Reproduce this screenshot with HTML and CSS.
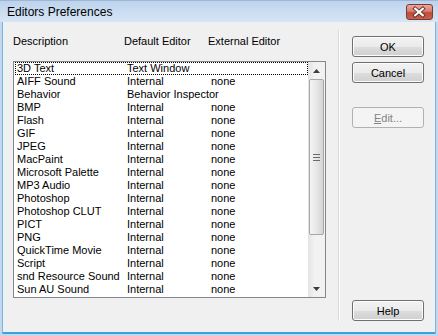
FILE: index.html
```html
<!DOCTYPE html>
<html>
<head>
<meta charset="utf-8">
<link rel="stylesheet" href="styles.css">
</head>
<body>
<div class="window">
  <div class="titlebar">
    <span class="title">Editors Preferences</span>
    <div class="close">
      <svg width="27" height="16" viewBox="0 0 27 16">
        <path d="M9.5 4.5 L17.5 11.5 M17.5 4.5 L9.5 11.5" stroke="#5a2a22" stroke-width="4" stroke-linecap="square"/>
        <path d="M9.5 4.5 L17.5 11.5 M17.5 4.5 L9.5 11.5" stroke="#ffffff" stroke-width="2.2" stroke-linecap="square"/>
      </svg>
    </div>
  </div>
  <div class="client">
    <div class="main">
      <div class="headers">
        <span class="c1">Description</span><span class="c2">Default Editor</span><span class="c3">External Editor</span>
      </div>
      <div class="listbox">
        <div class="rows">
          <div class="row focus"><span class="c1">3D Text</span><span class="c2">Text Window</span><span class="c3"></span></div>
          <div class="row"><span class="c1">AIFF Sound</span><span class="c2">Internal</span><span class="c3">none</span></div>
          <div class="row"><span class="c1">Behavior</span><span class="c2">Behavior Inspector</span><span class="c3"></span></div>
          <div class="row"><span class="c1">BMP</span><span class="c2">Internal</span><span class="c3">none</span></div>
          <div class="row"><span class="c1">Flash</span><span class="c2">Internal</span><span class="c3">none</span></div>
          <div class="row"><span class="c1">GIF</span><span class="c2">Internal</span><span class="c3">none</span></div>
          <div class="row"><span class="c1">JPEG</span><span class="c2">Internal</span><span class="c3">none</span></div>
          <div class="row"><span class="c1">MacPaint</span><span class="c2">Internal</span><span class="c3">none</span></div>
          <div class="row"><span class="c1">Microsoft Palette</span><span class="c2">Internal</span><span class="c3">none</span></div>
          <div class="row"><span class="c1">MP3 Audio</span><span class="c2">Internal</span><span class="c3">none</span></div>
          <div class="row"><span class="c1">Photoshop</span><span class="c2">Internal</span><span class="c3">none</span></div>
          <div class="row"><span class="c1">Photoshop CLUT</span><span class="c2">Internal</span><span class="c3">none</span></div>
          <div class="row"><span class="c1">PICT</span><span class="c2">Internal</span><span class="c3">none</span></div>
          <div class="row"><span class="c1">PNG</span><span class="c2">Internal</span><span class="c3">none</span></div>
          <div class="row"><span class="c1">QuickTime Movie</span><span class="c2">Internal</span><span class="c3">none</span></div>
          <div class="row"><span class="c1">Script</span><span class="c2">Internal</span><span class="c3">none</span></div>
          <div class="row"><span class="c1">snd Resource Sound</span><span class="c2">Internal</span><span class="c3">none</span></div>
          <div class="row"><span class="c1">Sun AU Sound</span><span class="c2">Internal</span><span class="c3">none</span></div>
        </div>
        <div class="scrollbar">
          <div class="arrow"><svg width="7" height="4" viewBox="0 0 7 4"><path d="M0 4 L3.5 0 L7 4 Z" fill="#3c3c3c"/></svg></div>
          <div class="track">
            <div class="thumb">
              <svg width="7" height="7" viewBox="0 0 7 7"><path d="M0 0.5H7M0 3.5H7M0 6.5H7" stroke="#6b6b6b" stroke-width="1"/></svg>
            </div>
          </div>
          <div class="arrow"><svg width="7" height="4" viewBox="0 0 7 4"><path d="M0 0 L7 0 L3.5 4 Z" fill="#3c3c3c"/></svg></div>
        </div>
      </div>
    </div>
    <div class="divider"></div>
    <div class="buttons">
      <div class="btn">OK</div>
      <div class="btn">Cancel</div>
      <div class="btn disabled edit"><u>E</u>dit...</div>
      <div class="spacer"></div>
      <div class="btn">Help</div>
    </div>
  </div>
</div>
</body>
</html>
```

FILE: styles.css
```css
* { box-sizing: border-box; }
html, body { margin: 0; padding: 0; background: #ffffff; }
body { font-family: "Liberation Sans", Arial, sans-serif; font-size: 11px; color: #000; }

.window {
  width: 438px;
  height: 336px;
  display: flex;
  flex-direction: column;
  background: #c4d7ee;
  overflow: hidden;
}

.titlebar {
  height: 22px;
  flex: none;
  display: flex;
  align-items: center;
  justify-content: space-between;
  padding: 0 5px 0 7px;
  background: linear-gradient(#bdd2ec 0%, #c9dcf1 45%, #d7e5f5 100%);
  border-top: 1px solid #9db7d6;
}
.title {
  font-family: "Liberation Sans", Arial, sans-serif;
  font-size: 12px;
  color: #000;
  padding-top: 1px;
}
.close {
  width: 27px;
  height: 16px;
  margin-top: 1px;
  border: 1px solid #7a3b32;
  border-radius: 3px;
  background: linear-gradient(#e8a99e 0%, #d97d6f 45%, #c14a39 55%, #c9604f 100%);
  display: flex;
  align-items: center;
  justify-content: center;
}
.close svg { display: block; margin-left: -1px; }

.client {
  flex: 1;
  display: flex;
  background: #f0f0f0;
  margin: 0 3px 2px 3px;
  border-bottom: 2px solid #3aa3dc;
  box-shadow: -1px 0 0 #6eb9e3, 1px 0 0 #6eb9e3;
  padding: 0 11px 0 10px;
}

.main { width: 313px; flex: none; display: flex; flex-direction: column; }
.headers {
  display: flex;
  height: 13px;
  line-height: 13px;
  margin-top: 13px;
  margin-bottom: 13px;
}
.headers .c1 { width: 111px; }
.headers .c2 { width: 84px; }

.listbox {
  height: 237px;
  border: 1px solid #828790;
  background: #ffffff;
  display: flex;
}
.rows { flex: 1; }
.row {
  display: flex;
  height: 13px;
  line-height: 13px;
  padding-left: 3px;
  white-space: nowrap;
}
.row.focus { outline: 1px dotted #000; outline-offset: -1px; margin-left: 1px; padding-left: 2px; }
.row .c1 { width: 110px; }
.row .c2 { width: 84px; }

.scrollbar {
  width: 17px;
  flex: none;
  display: flex;
  flex-direction: column;
  background: linear-gradient(90deg, #e3e3e3, #f2f2f2 40%, #f2f2f2);
}
.arrow {
  height: 17px;
  flex: none;
  display: flex;
  align-items: center;
  justify-content: center;
}
.arrow svg { display: block; }
.track { flex: 1; display: flex; flex-direction: column; }
.thumb {
  margin: 0 1px;
  height: 156px;
  border: 1px solid #a7a7a7;
  border-radius: 2px;
  background: linear-gradient(90deg, #f5f5f5, #e6e6e6 50%, #d4d4d4);
  display: flex;
  align-items: center;
  justify-content: center;
}
.thumb svg { display: block; }

.divider {
  width: 2px;
  flex: none;
  margin: 8px 12px 11px 12px;
  border-left: 1px solid #d9d9d9;
  border-right: 1px solid #ffffff;
}

.buttons {
  width: 72px;
  flex: none;
  display: flex;
  flex-direction: column;
  padding-top: 14px;
  padding-bottom: 11px;
}
.btn {
  height: 21px;
  flex: none;
  border: 1px solid #707070;
  border-radius: 3px;
  background: linear-gradient(#f2f2f2 0%, #ebebeb 50%, #dddddd 51%, #cfcfcf 100%);
  box-shadow: inset 0 0 0 1px #fcfcfc;
  display: flex;
  align-items: center;
  justify-content: center;
  font-size: 11px;
  margin-bottom: 5px;
}
.btn.edit { margin-top: 19px; }
.btn.disabled {
  border-color: #adb2b5;
  background: #f4f4f4;
  box-shadow: none;
  color: #838383;
}
.btn:last-child { margin-bottom: 0; }
.spacer { flex: 1; }
```
